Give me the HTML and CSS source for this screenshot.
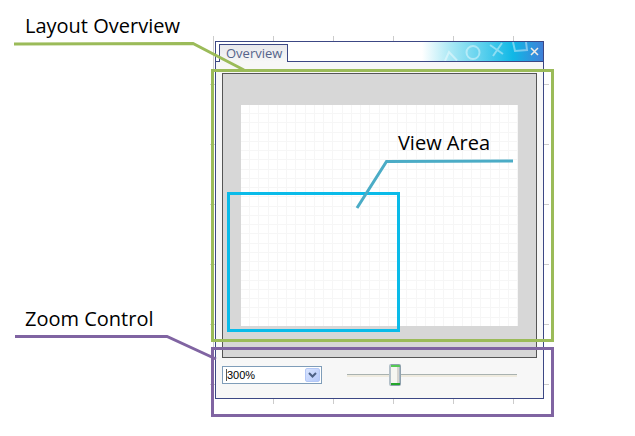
FILE: index.html
```html
<!DOCTYPE html>
<html lang="en">
<head>
<meta charset="utf-8">
<meta name="viewport" content="width=device-width, initial-scale=1">
<title>Overview panel</title>
<link rel="stylesheet" href="styles.css">
</head>
<body>
<main class="figure">
  <div class="callouts">
    <p class="label">Layout Overview</p>
    <p class="label">Zoom Control</p>
  </div>

  <div class="stage">
    <section class="panel">
      <header class="titlebar">
        <h1 class="tab">Overview</h1>
        <div class="banner">
          <svg class="shapes" width="104" height="19" viewBox="0 0 104 19" fill="none" stroke="#fff" stroke-opacity=".42" stroke-width="2" aria-hidden="true">
            <path d="M3 19 7 10 15 18.500"/>
            <circle cx="31" cy="10.500" r="6.500"/>
            <path d="M48 3 61 12M60 1 51 14"/>
            <path d="M71 0 73 9 85 8 84 0"/>
          </svg>
          <button class="close" type="button" aria-label="Close">
            <svg width="9" height="9" viewBox="0 0 9 9" stroke="#f2ede6" stroke-width="1.500" aria-hidden="true"><path d="M1 1 8 8M8 1 1 8"/></svg>
          </button>
        </div>
      </header>

      <div class="map-section">
        <div class="map">
          <div class="paper">
            <svg class="grid" width="100%" height="100%" aria-hidden="true">
              <defs>
                <pattern id="cells" width="37" height="37" patternUnits="userSpaceOnUse">
                  <path d="M8 0h1v37h-1zM17 0h1v37h-1zM27 0h1v37h-1zM36 0h1v37h-1zM0 8h37v1H0zM0 17h37v1H0zM0 27h37v1H0zM0 36h37v1H0z" fill="#f6f6f6"/>
                </pattern>
              </defs>
              <rect width="100%" height="100%" fill="url(#cells)"/>
            </svg>
            <p class="label area-label">View Area</p>
            <div class="view-area"></div>
          </div>
        </div>
      </div>

      <form class="zoom">
        <div class="combo">
          <input class="combo-text" type="text" value="300%" aria-label="Zoom level">
          <button class="combo-arrow" type="button" aria-label="Show zoom levels">
            <svg width="9" height="7" viewBox="0 0 9 7" fill="none" stroke="#4d6185" stroke-width="2" aria-hidden="true"><path d="M1 1 4.500 4.500 8 1"/></svg>
          </button>
        </div>
        <input class="slider" type="range" min="0" max="158" value="42" aria-label="Zoom">
      </form>
    </section>
  </div>

  <svg class="leaders" width="635" height="436" viewBox="0 0 635 436" fill="none" stroke-width="3" aria-hidden="true">
    <path d="M14 44 193 43.500 244 70" stroke="#9bbb59"/>
    <path d="M15 336.500H167L216 359" stroke="#8064a2"/>
    <path d="M513 161 386.500 161.500 357 208" stroke="#4bacc6"/>
  </svg>
</main>
</body>
</html>
```

FILE: styles.css
```css
* {
  box-sizing: border-box;
}

body {
  margin: 0;
  background: #fff;
  color: #000;
  font-family: "Open Sans", "Noto Sans", sans-serif;
}

.figure {
  position: relative;
  display: grid;
  grid-template-columns: 210px minmax(0, 1fr) 86px;
  overflow: hidden;
}

.callouts {
  display: flex;
  flex-direction: column;
  gap: 265px;
  padding: 12px 0 0 25px;
}

.label {
  margin: 0;
  font-size: 20px;
  font-weight: 400;
  line-height: 28px;
  white-space: nowrap;
}

/* Canvas rulings that show around the panel */
.stage {
  margin: 36px 0;
  padding: 5px;
  background:
    repeating-linear-gradient(90deg, transparent 0 3px, #ccc 3px 4px, transparent 4px 60px),
    repeating-linear-gradient(transparent 0 48px, #ccc 48px 49px, transparent 49px 60px);
}

.panel {
  border: 1px solid #3c4784;
  background: #f7f7f7;
}

.titlebar {
  display: flex;
  justify-content: space-between;
  height: 20px;
  border-bottom: 1px solid #3c4784;
  background: #fff;
}

.tab {
  height: 18px;
  margin: 2px 0 0 3px;
  padding: 0 5px 0 6px;
  border: 1px solid #3c4784;
  border-bottom: 0;
  background: linear-gradient(#e8e8ec, #f7f7f7);
  color: #55648a;
  font-size: 13px;
  font-weight: 400;
  line-height: 17px;
}

.banner {
  display: flex;
  align-items: center;
  height: 19px;
  padding-left: 20px;
  background: linear-gradient(90deg, #fff, #a8e8f5 24%, #10b8e6 75%, #4080d8);
}

.shapes {
  margin-right: -16px;
}

.close {
  display: flex;
  margin-right: 4px;
  padding: 0;
  border: 0;
  background: none;
}

/* Highlight frames */
.map-section,
.zoom {
  position: relative;
}

.map-section::after,
.zoom::after {
  content: "";
  position: absolute;
  pointer-events: none;
}

.map-section::after {
  inset: 7px -11px 16px -5px;
  border: 3px solid #9bbb59;
}

.zoom::after {
  inset: -11px -11px -19px -5px;
  border: 3px solid #8064a2;
}

.map-section {
  padding: 11px 6px 0;
}

.map {
  padding: 31px 18px;
  border: 1px solid #555;
  background: #d7d7d7;
}

.paper {
  position: relative;
  aspect-ratio: 277 / 221;
  background: #fff;
}

.grid {
  display: block;
}

.area-label {
  position: absolute;
  top: 24px;
  right: 28px;
}

.view-area {
  position: absolute;
  top: 87px;
  left: -14px;
  width: 173px;
  height: 140px;
  border: 3px solid #0abbe9;
}

.zoom {
  display: flex;
  align-items: center;
  gap: 25px;
  padding: 8px 26px 14px 6px;
}

.combo {
  display: flex;
  width: 100px;
  height: 18px;
  padding: 1px;
  border: 1px solid #7f9db9;
  background: #fff;
}

.combo-text {
  flex: 1;
  min-width: 0;
  padding: 0;
  border: 0;
  background: linear-gradient(#555, #555) 2px 1px / 1px 12px no-repeat;
  color: #000;
  font: 11px/14px "Liberation Sans", sans-serif;
  text-indent: 3px;
  outline: 0;
}

.combo-arrow {
  display: grid;
  place-items: center;
  width: 15px;
  height: 14px;
  padding: 0;
  border: 1px solid #b4c8f6;
  border-radius: 2px;
  background: linear-gradient(135deg, #d8e4ff, #b5c9fa);
}

.slider {
  flex: 1;
  min-width: 0;
  height: 22px;
  margin: -2px 0;
  appearance: none;
  background: none;
}

.slider::-webkit-slider-runnable-track {
  height: 3px;
  background: linear-gradient(#a9b2b0 0 1px, #efebdf 1px);
}

.slider::-webkit-slider-thumb {
  appearance: none;
  width: 12px;
  height: 22px;
  margin-top: -10px;
  border: 1px solid #8fa1ae;
  border-left: 2px solid #b3c0c9;
  border-radius: 2px;
  background:
    linear-gradient(#55c955 0 2px, transparent 2px 18px, #24a62c 18px),
    linear-gradient(90deg, #f5f6f1 0 6px, #d6d5d0 6px 8px, #a9b8c4 8px);
}

.leaders {
  position: absolute;
  top: 0;
  left: 0;
  pointer-events: none;
}
```
